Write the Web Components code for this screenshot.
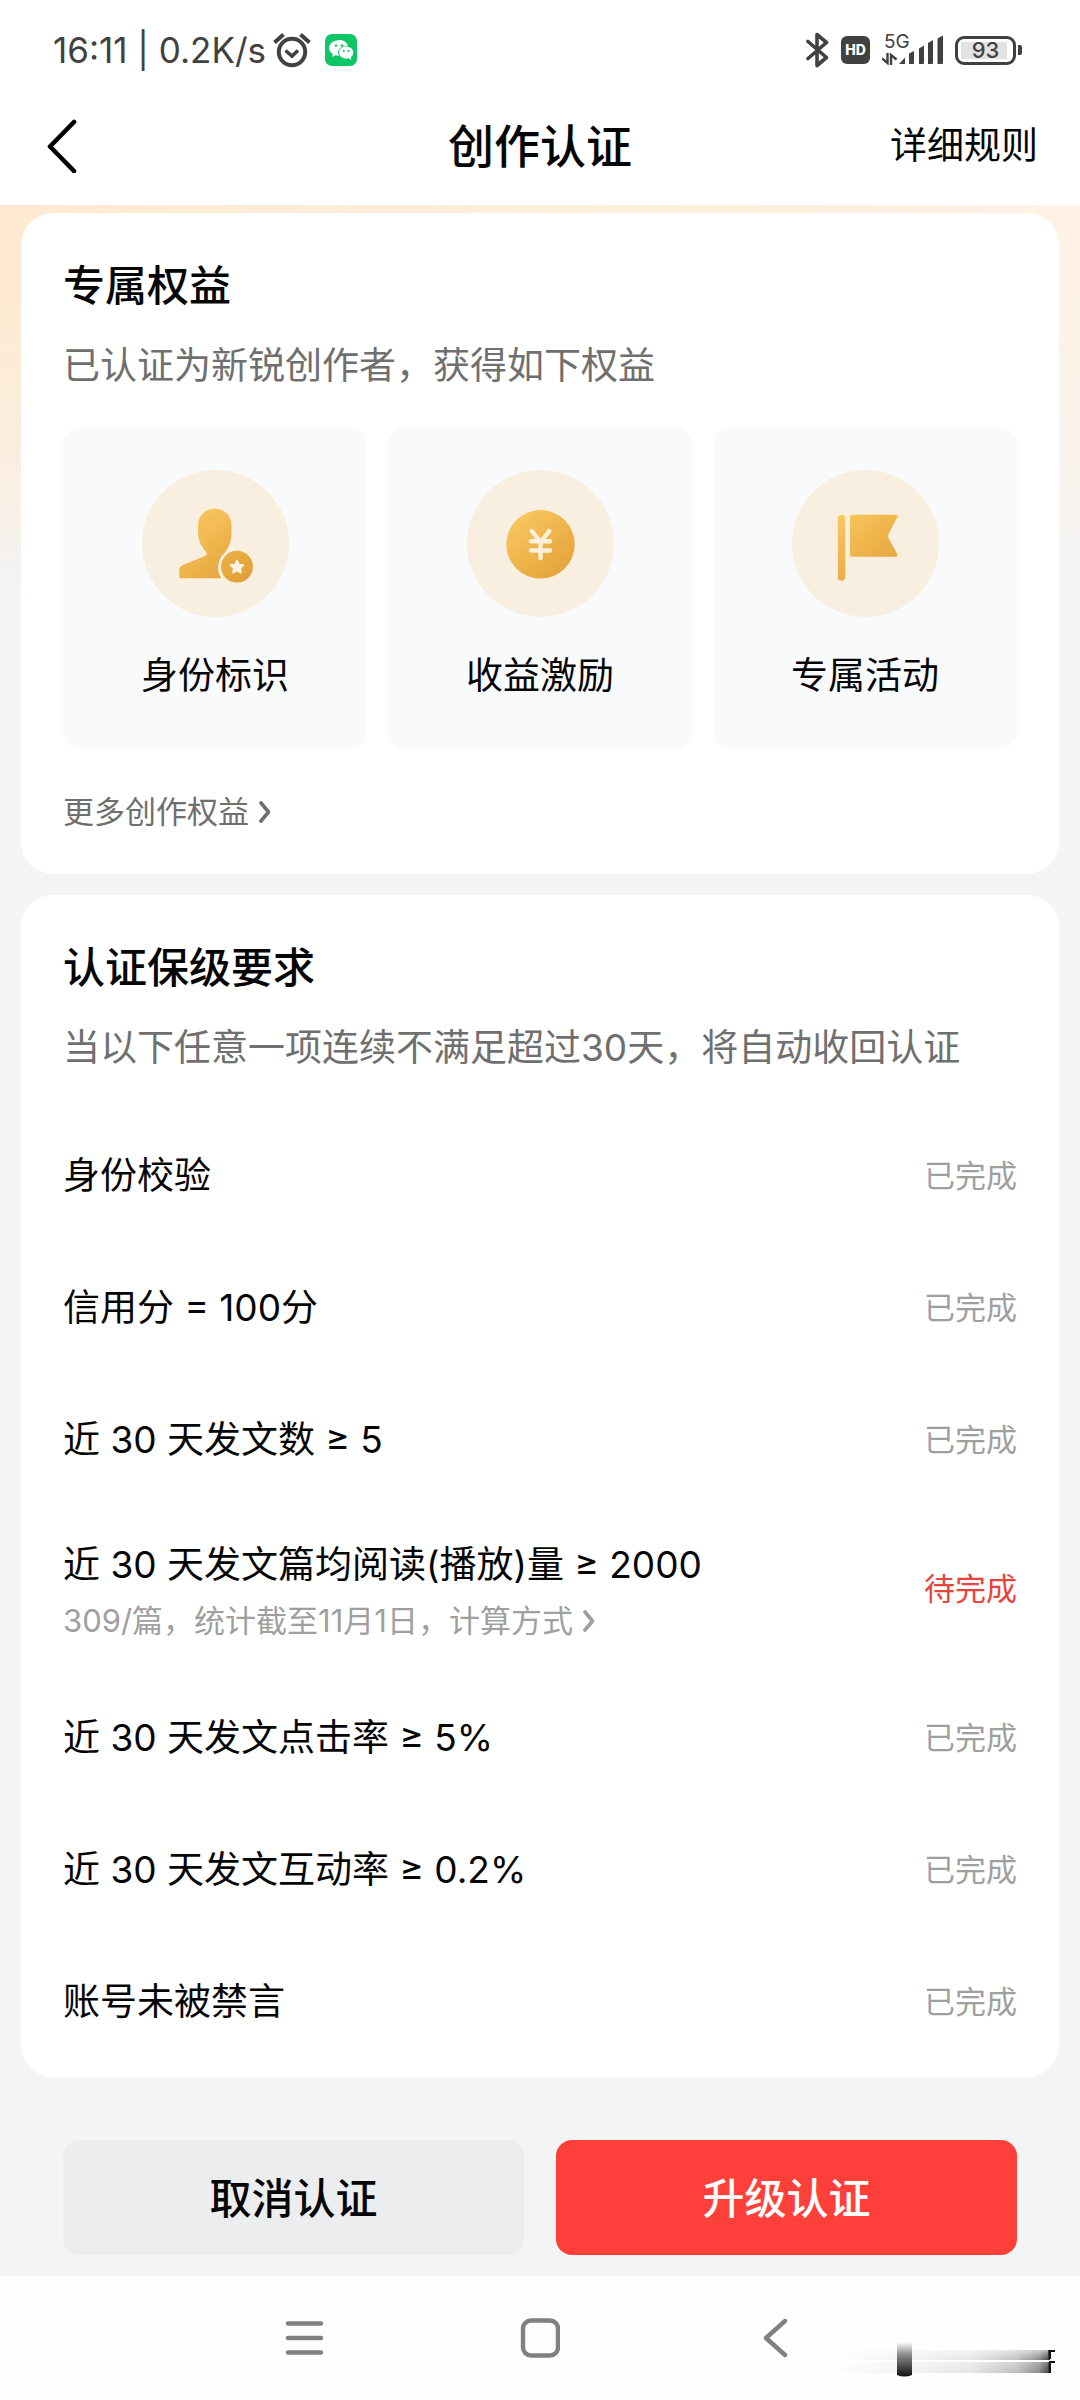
<!DOCTYPE html>
<html lang="zh-CN">
<head>
<meta charset="utf-8">
<meta name="viewport" content="width=device-width, initial-scale=1">
<title>创作认证</title>
<style>
  :root {
    --ink: #060606;
    --muted: #6f6f6f;
    --faint: #9f9f9f;
    --alert: #e6443f;
    --page: #f3f4f6;
    --edge: 21px;
    --inset: 42px;
    --text-xl: 46px;
    --text-l: 42px;
    --text-m: 37px;
    --text-s: 31px;
  }
  body {
    margin: 0;
    background: var(--page);
    color: var(--ink);
    font-family: Inter, "Noto Sans CJK SC", sans-serif;
    font-size: var(--text-m);
  }
</style>
</head>
<body>
<certification-page></certification-page>

<script>
const define = (name, html, setup) => {
  const template = document.createElement('template');
  template.innerHTML = html;
  customElements.define(name, class extends HTMLElement {
    constructor() {
      super();
      this.attachShadow({ mode: 'open' }).append(template.content.cloneNode(true));
    }
    connectedCallback() {
      if (setup) setup(this, this.shadowRoot);
    }
  });
};

/* Phone status bar */
define('status-bar', `
<style>
  :host { display: flex; justify-content: space-between; align-items: center; height: 72px; padding: 14px 58px 0 53px; color: #414141; background: #fff; }
  .side { display: flex; align-items: center; }
  .time { font-size: 35px; line-height: 44px; white-space: pre; }
  svg { display: block; flex: none; }
  .alarm { margin-left: 7px; }
  .chat { margin-left: 14px; }
  .hd { display: grid; place-items: center; width: 29px; height: 28px; margin-left: 12px; border-radius: 6px; background: #414141; color: #fff; font-size: 14px; font-weight: 800; line-height: 28px; }
  .signal { display: grid; grid-template-columns: 17px 44px; grid-template-rows: 18px 16px; margin-left: 12px; }
  .gen { grid-area: 1 / 1 / 2 / 3; font-size: 19px; line-height: 18px; padding-left: 2px; }
  .arrows { grid-area: 2 / 1; align-self: center; }
  .bars { grid-area: 1 / 2 / 3 / 3; align-self: center; }
  .battery { display: flex; align-items: center; margin-left: 12px; }
  .cell { display: grid; place-items: center; box-sizing: border-box; width: 61px; height: 29px; border: 3px solid #414141; border-radius: 9px; padding: 3px; }
  .cell b { width: 100%; background: linear-gradient(90deg, #e2e2e2 93%, #fff 93%); text-align: center; font-size: 22px; font-weight: 500; line-height: 17px; }
  .nub { width: 4px; height: 10px; margin-left: 2px; border-radius: 0 2px 2px 0; background: #414141; }
</style>
<div class="side">
  <span class="time">16:11 | 0.2K/s</span>
  <svg class="alarm" width="38" height="36" viewBox="0 0 38 36" fill="none" stroke="#414141" stroke-width="4">
    <circle cx="19" cy="20" r="13.2"/><path d="M12.5 18.5 19 24l6-5.5" stroke-width="3.6"/><path d="M1.5 10.5 10.5 2.5M27.5 2.5l9 8"/>
  </svg>
  <svg class="chat" width="32" height="32" viewBox="0 0 32 32">
    <rect width="32" height="32" rx="7" fill="#0fc667"/>
    <path fill="#fff" d="M15 6C8.900 6 4 9.600 4 14c0 2.500 1.500 4.500 3.800 6l-.8 3 3.400-1.800c1.100.3 2.200.5 3.400.4A7.500 7.500 0 0 1 13 19c0-4.300 4-7.200 9-7.200h1C21.800 8.300 18.600 6 15 6Z"/>
    <path fill="#fff" d="M28.300 18.600c0-3.400-3.300-6-7.200-6s-7.200 2.600-7.200 6 3.200 6 7.200 6c.9 0 1.700-.1 2.500-.4l2.800 1.500-.7-2.400c1.600-1.100 2.600-2.800 2.600-4.700Z"/>
    <g fill="#0fc667"><circle cx="11" cy="11.500" r="1.300"/><circle cx="17" cy="11.500" r="1.300"/><circle cx="18.700" cy="17" r="1.100"/><circle cx="23.500" cy="17" r="1.100"/></g>
  </svg>
</div>
<div class="side">
  <svg width="23" height="36" viewBox="0 0 23 36" fill="none" stroke="#414141" stroke-width="3.600" stroke-linejoin="round" stroke-linecap="round"><path d="M2 9.500 20.500 25.500 11 33.500V2.500L20.500 10.500 2 26.500"/></svg>
  <span class="hd">HD</span>
  <div class="signal">
    <span class="gen">5G</span>
    <svg class="arrows" width="15" height="12" viewBox="0 0 15 12" fill="none" stroke="#414141" stroke-width="2.400"><path d="M5.500 0v10L0 5.500M9 12V2l5.500 4.500"/></svg>
    <svg class="bars" width="44" height="30" viewBox="0 0 44 30" fill="#414141"><path d="M0 29 6 22.500V29ZM10 29V18.500l5-2.500v12q0 1-1 1ZM20 29V13.500l5-3V28q0 1-1 1ZM29 29V8l5-3v23q0 1-1 1ZM38.500 29V3.500L44 .5V28q0 1-1 1Z"/></svg>
  </div>
  <div class="battery"><span class="cell"><b>93</b></span><i class="nub"></i></div>
</div>`);

/* Title bar with back button and a link */
define('page-header', `
<style>
  :host { display: grid; grid-template-columns: 1fr auto 1fr; align-items: center; height: 119px; padding: 0 42px; background: #fff; }
  button { justify-self: start; padding: 0 4px; border: 0; background: none; }
  svg { display: block; }
  h1 { margin: 0; font-size: var(--text-xl); font-weight: 500; line-height: 60px; }
  a { justify-self: end; color: inherit; text-decoration: none; line-height: 52px; }
</style>
<button type="button" aria-label="返回"><svg width="32" height="54" viewBox="0 0 32 54" fill="none" stroke="#000" stroke-width="4.600" stroke-linecap="round" stroke-linejoin="round"><path d="M28 3 4 27.500 28 52"/></svg></button>
<h1><slot></slot></h1>
<a href="#rules"><slot name="link"></slot></a>`);

/* White rounded card with heading and description */
define('section-card', `
<style>
  :host { display: block; padding: 43px var(--inset) 0; border-radius: 32px; background: #fff; }
  h2 { margin: 0 0 24px; font-size: var(--text-l); font-weight: 500; line-height: 60px; }
  p { margin: 0 0 36px; color: var(--muted); line-height: 52px; }
</style>
<h2><slot name="heading"></slot></h2>
<p><slot name="description"></slot></p>
<slot></slot>`);

/* Small text link followed by a chevron */
define('more-link', `
<style>
  :host { display: flex; font-size: var(--text-s); line-height: 44px; }
  a { display: flex; align-items: center; gap: 10px; color: inherit; text-decoration: none; }
  svg { display: block; }
</style>
<a href="#more"><slot></slot><svg width="12" height="24" viewBox="0 0 12 24" fill="none" stroke="currentColor" stroke-width="3.600" stroke-linecap="round" stroke-linejoin="round"><path d="M2 3l7.500 9L2 21"/></svg></a>`);

const benefitIcons = {
  identity: `
    <path fill="url(#gold)" d="M72.800 38.700c-9.600 0-16.700 7-16.700 16.500v8.300c0 8 4 13.500 7.800 18.300 1.300 1.700 1.200 3.200-.6 4L41 95c-2.600 1-3.800 2.800-3.800 5.200v5.600c0 1.700 1 2.500 2.600 2.500h39.500A20 20 0 0 1 83 82.500c3.300-4.600 6.500-10.500 6.500-18.500v-8.800c0-9.500-7.100-16.500-16.700-16.500Z"/>
    <circle cx="95" cy="96.700" r="15.900" fill="url(#gold)"/>
    <path fill="#fbf3e6" stroke="#fbf3e6" stroke-width="1.500" stroke-linejoin="round" d="m95 90.200 2 4.200 4.600.6-3.400 3.200.9 4.600-4.100-2.200-4.100 2.200.9-4.600-3.400-3.200 4.600-.6Z"/>`,
  income: `
    <circle cx="73.500" cy="74.300" r="34.200" fill="url(#gold)"/>
    <path fill="none" stroke="#fbf0dc" stroke-width="4.400" stroke-linecap="round" d="m64.700 61 8.800 11 8.800-11M64 71.300h19M64 80.500h19M73.500 72v16"/>`,
  event: `
    <rect x="45.800" y="44.700" width="7.400" height="66" rx="3.700" fill="url(#gold)"/>
    <path fill="url(#gold)" d="M60.400 44.700h42.800q3.400 0 1.800 3L96.600 64q-1 2 0 4l8.400 15.700q1.600 3-1.800 3H60.400q-2.500 0-2.500-2.500v-37q0-2.500 2.500-2.500Z"/>`
};

define('benefit-tile', `
<style>
  :host { display: flex; flex-direction: column; align-items: center; gap: 33px; padding: 42px 0 46px; border-radius: 16px; background: #f9fafc; line-height: 52px; }
  svg { display: block; }
</style>
<svg width="147" height="147" viewBox="0 0 147 147" aria-hidden="true">
  <defs><linearGradient id="gold" gradientUnits="userSpaceOnUse" x1="50" y1="45" x2="102" y2="108"><stop stop-color="#f9c65e"/><stop offset="1" stop-color="#e3a038"/></linearGradient></defs>
  <circle cx="73.500" cy="73.500" r="73.500" fill="#f9efe0"/><g></g>
</svg>
<slot></slot>`, (host, root) => {
  root.querySelector('g').innerHTML = benefitIcons[host.getAttribute('icon')];
});

/* One requirement with its state on the right */
define('requirement-row', `
<style>
  :host { display: flex; align-items: center; justify-content: space-between; padding: 42px 0; }
  :host([detailed]) { padding: 29px 0; }
  .name { line-height: 48px; }
  :host([detailed]) .name { padding-top: 6px; }
  .state { color: var(--faint); font-size: var(--text-s); line-height: 48px; }
  :host([pending]) .state { color: var(--alert); }
  ::slotted([slot="detail"]) { margin-top: 10px; color: var(--faint); }
</style>
<div><div class="name"><slot></slot></div><slot name="detail"></slot></div>
<span class="state"></span>`, (host, root) => {
  root.querySelector('.state').textContent = host.hasAttribute('pending') ? '待完成' : '已完成';
});

define('action-button', `
<style>
  :host { display: block; flex: 1; }
  button { display: block; width: 100%; height: 115px; padding: 0 0 4px; border: 0; border-radius: 16px; background: #ecedef; color: inherit; font: inherit; font-size: var(--text-l); font-weight: 500; }
  :host([primary]) button { background: #fe3f3a; color: #fff; }
</style>
<button type="button"><slot></slot></button>`);

/* Three-key system navigation */
define('system-nav', `
<style>
  :host { position: relative; display: flex; justify-content: center; align-items: center; gap: 196px; height: 124px; background: #fefefe; }
  button { padding: 0; border: 0; background: none; }
  svg { display: block; }
  .smudge { position: absolute; right: 24px; bottom: 20px; }
</style>
<button type="button" aria-label="最近任务"><svg width="40" height="40" viewBox="0 0 40 40" stroke="#808080" stroke-width="4.400" stroke-linecap="round"><path d="M4 5.500h33M4 20h33M4 34.500h33"/></svg></button>
<button type="button" aria-label="主屏幕"><svg width="40" height="40" viewBox="0 0 40 40" fill="none" stroke="#808080" stroke-width="4.400"><rect x="3" y="2.500" width="35" height="35" rx="8"/></svg></button>
<button type="button" aria-label="返回"><svg width="40" height="40" viewBox="0 0 40 40" fill="none" stroke="#808080" stroke-width="4.400" stroke-linecap="round" stroke-linejoin="round"><path d="M29 3 10 20l19 17"/></svg></button>
<svg class="smudge" width="232" height="40" viewBox="0 0 232 40" aria-hidden="true">
  <defs>
    <linearGradient id="streak"><stop stop-color="#000" stop-opacity="0"/><stop offset=".35" stop-color="#000" stop-opacity=".04"/><stop offset=".65" stop-color="#000" stop-opacity=".1"/><stop offset=".85" stop-color="#000" stop-opacity=".25"/><stop offset=".95" stop-color="#000" stop-opacity=".45"/><stop offset="1" stop-color="#000" stop-opacity=".8"/></linearGradient>
    <linearGradient id="soft" x2="0" y2="1"><stop stop-color="#fefefe" stop-opacity=".6"/><stop offset="1" stop-color="#fefefe" stop-opacity="0"/></linearGradient>
    <linearGradient id="knob" x2="0" y2="1"><stop stop-color="#111" stop-opacity="0"/><stop offset=".35" stop-color="#111" stop-opacity=".45"/><stop offset="1" stop-color="#111"/></linearGradient>
  </defs>
  <rect x="2" y="10" width="224" height="10" fill="url(#streak)"/><rect x="2" y="10" width="222" height="10" fill="url(#soft)"/>
  <rect x="2" y="22" width="224" height="11" fill="url(#streak)"/><rect x="2" y="22" width="222" height="11" fill="url(#soft)" opacity=".5"/>
  <path d="M226 19v-8h5M226 33V22h5" fill="none" stroke="#111" stroke-width="2"/>
  <path d="M73 2h15v33q-7.500 3-15 0Z" fill="url(#knob)"/>
</svg>`);

define('certification-page', `
<style>
  :host { display: flex; flex-direction: column; min-height: 100vh; }
  main {
    flex: 1; display: flex; flex-direction: column; gap: 21px; padding: 8px var(--edge) 0;
    background:
      linear-gradient(rgba(243,244,246,0) 80px, rgba(243,244,246,.45) 270px, #f3f4f6 390px),
      linear-gradient(90deg, #feead0, #fdf2e5);
  }
  .tiles { display: grid; grid-template-columns: repeat(3, 1fr); gap: 21px; }
  .benefits more-link { margin: 42px 0 40px; color: var(--muted); }
  .rules { padding-bottom: 9px; }
  footer { display: flex; gap: 32px; padding: 63px calc(var(--edge) + var(--inset)) 21px; }
</style>
<status-bar></status-bar>
<page-header>创作认证<span slot="link">详细规则</span></page-header>
<main>
  <section-card class="benefits">
    <span slot="heading">专属权益</span>
    <span slot="description">已认证为新锐创作者，获得如下权益</span>
    <div class="tiles">
      <benefit-tile icon="identity">身份标识</benefit-tile>
      <benefit-tile icon="income">收益激励</benefit-tile>
      <benefit-tile icon="event">专属活动</benefit-tile>
    </div>
    <more-link>更多创作权益</more-link>
  </section-card>
  <section-card class="rules">
    <span slot="heading">认证保级要求</span>
    <span slot="description">当以下任意一项连续不满足超过30天，将自动收回认证</span>
    <requirement-row>身份校验</requirement-row>
    <requirement-row>信用分 = 100分</requirement-row>
    <requirement-row>近 30 天发文数 ≥ 5</requirement-row>
    <requirement-row detailed pending>近 30 天发文篇均阅读(播放)量 ≥ 2000<more-link slot="detail">309/篇，统计截至11月1日，计算方式</more-link></requirement-row>
    <requirement-row>近 30 天发文点击率 ≥ 5%</requirement-row>
    <requirement-row>近 30 天发文互动率 ≥ 0.2%</requirement-row>
    <requirement-row>账号未被禁言</requirement-row>
  </section-card>
</main>
<footer>
  <action-button>取消认证</action-button>
  <action-button primary>升级认证</action-button>
</footer>
<system-nav></system-nav>`);
</script>
</body>
</html>
